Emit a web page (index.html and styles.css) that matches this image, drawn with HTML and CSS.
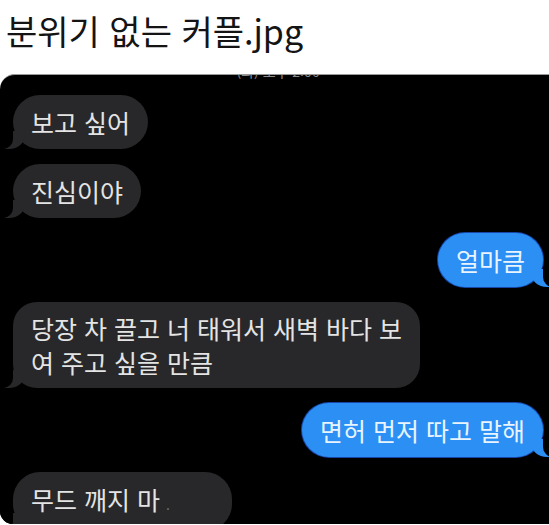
FILE: index.html
```html
<!DOCTYPE html>
<html lang="ko">
<head>
<meta charset="utf-8">
<title>분위기 없는 커플.jpg</title>
<link rel="stylesheet" href="styles.css">
</head>
<body>
<h1 class="title">분위기 없는 커플.jpg</h1>
<div class="shot">
  <div class="stamp">(화) 오후 2:06</div>
  <div class="bubble in">보고 싶어</div>
  <div class="bubble in">진심이야</div>
  <div class="bubble out">얼마큼</div>
  <div class="bubble in long">당장 차 끌고 너 태워서 새벽 바다 보<br>여 주고 싶을 만큼</div>
  <div class="bubble out">면허 먼저 따고 말해</div>
  <div class="bubble in last">무드 깨지 마<span class="dot">.</span></div>
</div>
</body>
</html>
```
FILE: styles.css
```css
html, body {
  margin: 0;
  padding: 0;
  background: #ffffff;
}
body {
  width: 549px;
  height: 525px;
  overflow: hidden;
  font-family: "Noto Sans CJK KR", "Noto Sans", sans-serif;
}
.title {
  margin: 0;
  padding: 8px 0 0 6px;
  height: 66px;
  font-size: 34px;
  font-weight: 400;
  line-height: 46px;
  color: #141414;
  letter-spacing: 0;
}
.shot {
  height: 450px;
  background: #000;
  border-top: 1px solid #9a9a9a;
  border-radius: 15px 0 0 13px;
  overflow: hidden;
  display: flex;
  flex-direction: column;
  align-items: flex-start;
  gap: 15px;
  padding: 0 6px 0 13px;
  box-sizing: border-box;
}
.stamp {
  margin-top: -12px;
  margin-bottom: 1px;
  align-self: center;
  color: #8a8a8a;
  font-size: 14px;
  line-height: 16px;
  height: 16px;
}
.bubble {
  position: relative;
  font-size: 25px;
  line-height: 34px;
  padding: 10px 18px;
  border-radius: 27px;
  color: #e4e4e4;
  background: #28282a;
  white-space: nowrap;
}
.bubble.in::before {
  content: "";
  position: absolute;
  bottom: 0;
  left: -8px;
  width: 20px;
  height: 18px;
  background: #28282a;
  border-bottom-right-radius: 16px 14px;
}
.bubble.in::after {
  content: "";
  position: absolute;
  bottom: 0;
  left: -14px;
  width: 14px;
  height: 20px;
  background: #000;
  border-bottom-right-radius: 10px;
}
.bubble.out {
  align-self: flex-end;
  background: #2b8ff4;
  color: #e8f4ff;
  box-shadow: 0 0 0 1px #1746a8;
}
.bubble.out::before {
  content: "";
  position: absolute;
  bottom: 0;
  right: -8px;
  width: 20px;
  height: 18px;
  background: #2b8ff4;
  border-bottom-left-radius: 16px 14px;
}
.bubble.out::after {
  content: "";
  position: absolute;
  bottom: 0;
  right: -14px;
  width: 14px;
  height: 20px;
  background: #000;
  border-bottom-left-radius: 10px;
}
.bubble.long {
  border-radius: 24px;
  padding: 9px 18px;
}
.bubble.last {
  padding-right: 62px;
}
.dot {
  color: #6a6a6a;
  font-size: 14px;
  margin-left: 6px;
}
```
